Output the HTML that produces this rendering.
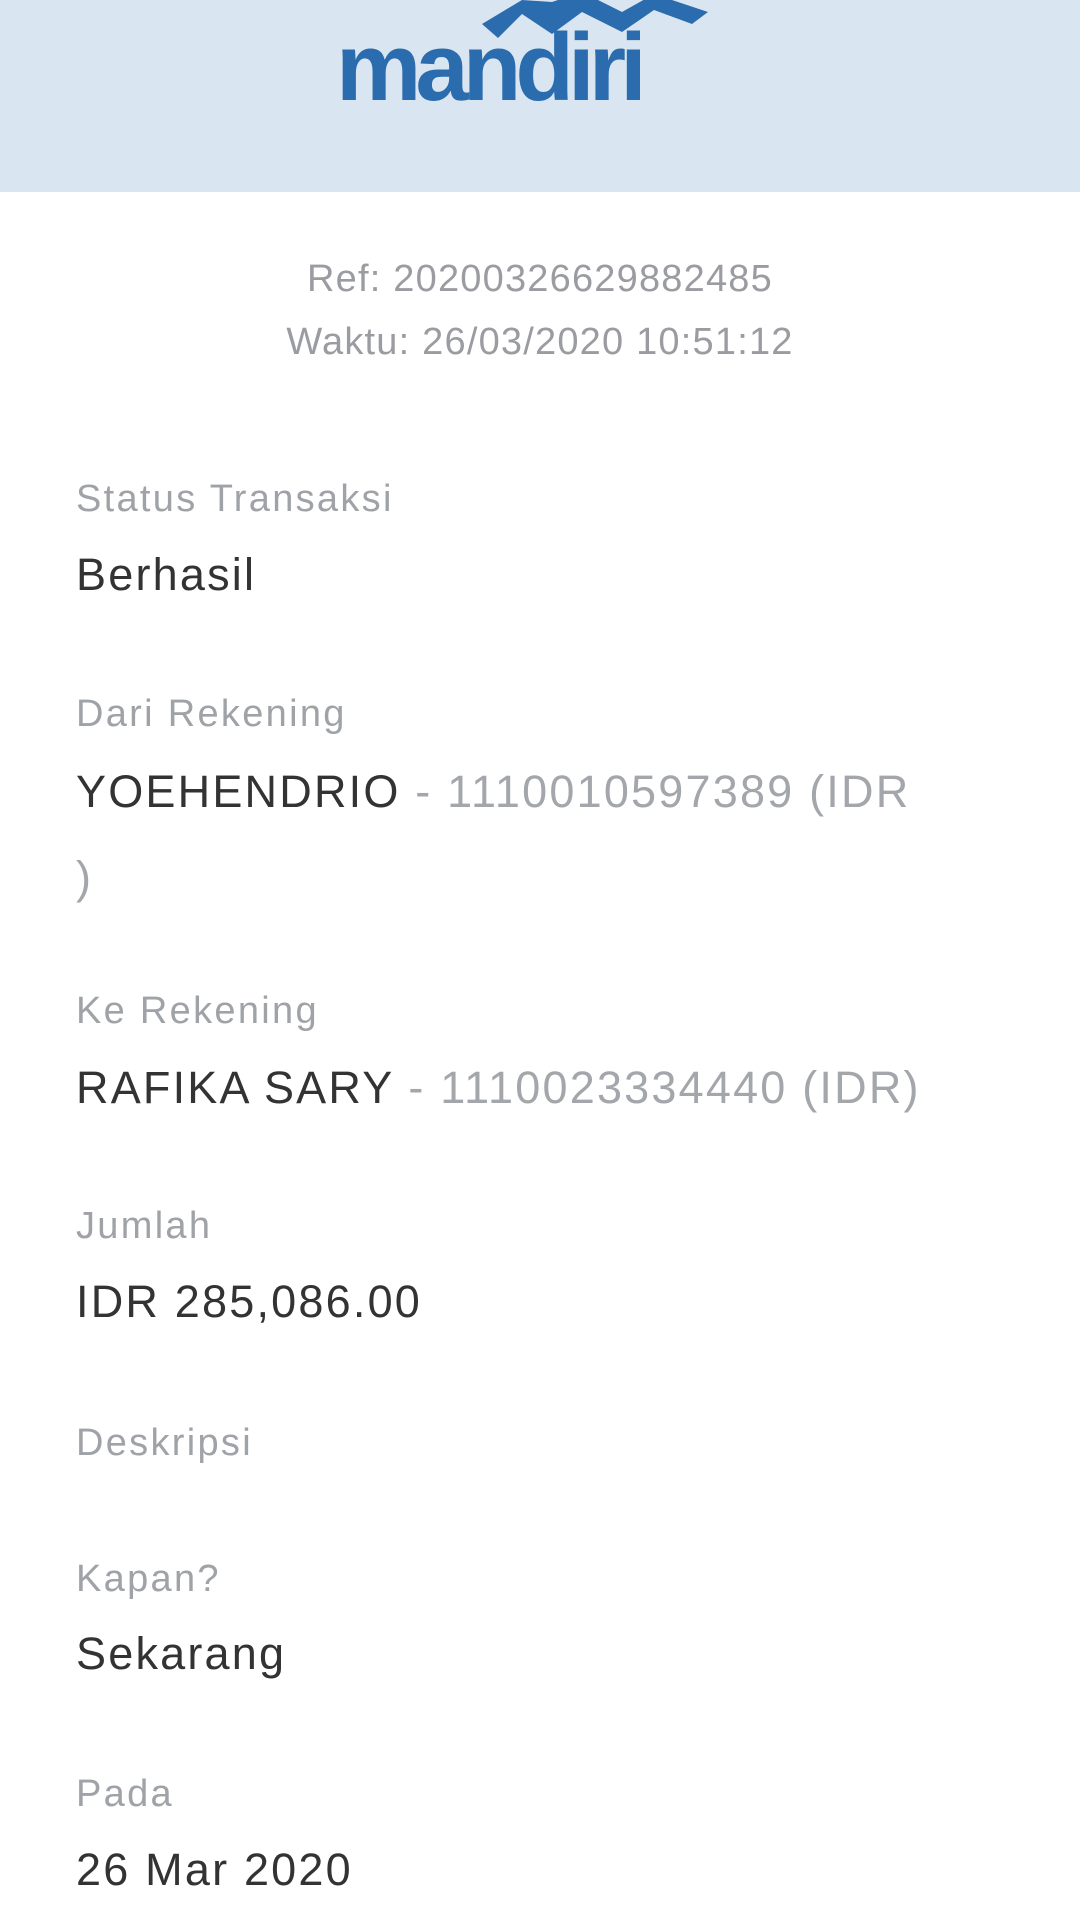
<!DOCTYPE html>
<html><head><meta charset="utf-8"><style>
body{margin:0;width:1080px;height:1920px;background:#fff;font-family:"Liberation Sans",sans-serif;overflow:hidden;position:relative}
.hdr{position:absolute;left:0;top:0;width:1080px;height:192px;background:#d9e6f1}
.logo{position:absolute;left:336px;top:18px;font-size:96px;font-weight:bold;color:#2a6cae;letter-spacing:-6px;line-height:100px}
.t{position:absolute;white-space:nowrap}
.c{left:0;width:1080px;text-align:center;color:#9a9ca1;font-size:38px;letter-spacing:1.2px}
.l{left:76px;color:#9fa2a7;font-size:38px;letter-spacing:2.3px}
.v{left:76px;color:#333;font-size:45px;letter-spacing:2.2px}
.g{color:#a3a6ab}
</style></head><body>
<div class="hdr">
<svg style="position:absolute;left:482px;top:0" width="230" height="40" viewBox="0 0 230 40">
<path d="M0 24 L40 0 L70 2 L100 -8 L140 12 L172 -6 L226 12 L210 24 L172 10 L140 32 L100 12 L70 34 L40 14 L16 38 Z" fill="#2a6cae"/>
</svg>
<div class="logo">mandiri</div>
</div>
<div class="t c" style="top:258px">Ref: 20200326629882485</div>
<div class="t c" style="top:321px">Waktu: 26/03/2020 10:51:12</div>
<div class="t l" style="top:478px">Status Transaksi</div>
<div class="t v" style="top:549px">Berhasil</div>
<div class="t l" style="top:693px">Dari Rekening</div>
<div class="t v" style="top:766px">YOEHENDRIO <span class="g">- 1110010597389 (IDR</span></div>
<div class="t v g" style="top:852px">)</div>
<div class="t l" style="top:990px">Ke Rekening</div>
<div class="t v" style="top:1062px">RAFIKA SARY <span class="g">- 1110023334440 (IDR)</span></div>
<div class="t l" style="top:1205px">Jumlah</div>
<div class="t v" style="top:1276px">IDR 285,086.00</div>
<div class="t l" style="top:1422px">Deskripsi</div>
<div class="t l" style="top:1558px">Kapan?</div>
<div class="t v" style="top:1628px">Sekarang</div>
<div class="t l" style="top:1773px">Pada</div>
<div class="t v" style="top:1844px">26 Mar 2020</div>
</body></html>
